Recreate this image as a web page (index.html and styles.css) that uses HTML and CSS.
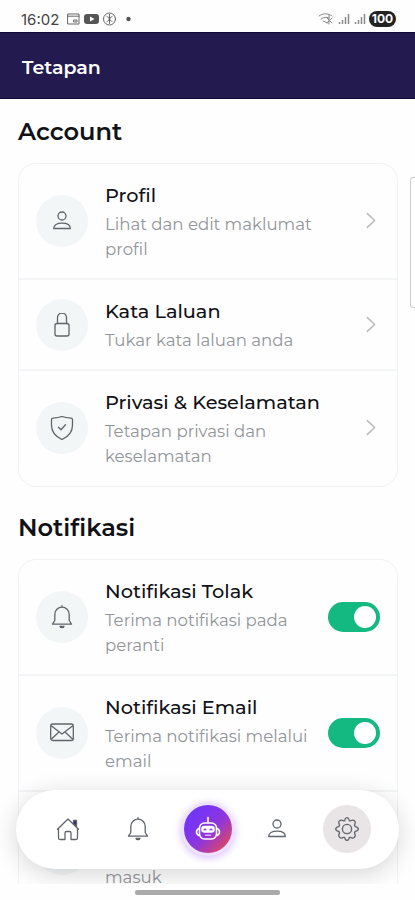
FILE: index.html
```html
<!DOCTYPE html>
<html lang="ms">
  <head>
    <meta charset="UTF-8" />
    <meta name="viewport" content="width=device-width, initial-scale=1.0" />
    <title>Tetapan</title>
    <link rel="stylesheet" href="styles.css" />
  </head>
  <body>
    <svg class="sprite">
      <symbol id="user" viewBox="0 0 24 24">
        <circle cx="12" cy="7" r="4" />
        <path d="M3.700 19.500c0-3.600 3.300-5.300 8.300-5.300s8.300 1.700 8.300 5.300z" />
      </symbol>
      <symbol id="bell" viewBox="0 0 24 24">
        <path d="M12 .6v1.600M4.800 15.500V9.400a7.200 7.200 0 0 1 14.400 0v6.100l2.300 3.700h-19z" />
        <path d="M10 21.300c.4 1.800 3.600 1.800 4 0z" />
      </symbol>
      <symbol id="chevron" viewBox="0 0 24 24">
        <path d="M8 4l8 7.500-8 7.500" />
      </symbol>
    </svg>

    <div class="statusbar">
      <span class="time">16:02</span>
      <svg class="status-left" viewBox="0 0 66 14">
        <path class="line" d="M1 2h11v10H1zM1 4.200h11M7 8h3v2H7z" />
        <rect class="solid" x="17" y="2" width="15" height="10" rx="3" />
        <path class="white" d="M23 4.500l4.500 2.500-4.500 2.500z" />
        <circle class="line" cx="42.500" cy="7" r="6" />
        <path class="line" d="M42.500 2.500v9M40 4.500c3 1 3 4 0 5M45 4.500c-3 1-3 4 0 5" />
        <circle class="solid" cx="61.500" cy="7" r="2.200" />
      </svg>
      <svg class="status-right" viewBox="0 0 48 14">
        <path class="line" d="M1 4c4-3 9-3 13 0M3 7c3-2 5-2 8-1M5 9l5 2M11 3v9M9 6l5 5M9 11l5-5" />
        <path class="signal" d="M21.500 12v-2M24.500 12V8M27.500 12V5M30.500 12V2M37.500 12v-2M40.500 12V8M43.500 12V5M46.500 12V2" />
      </svg>
      <span class="battery">100</span>
    </div>

    <header class="header">
      <h1>Tetapan</h1>
    </header>

    <main class="content">
      <h2>Account</h2>
      <div class="card">
        <div class="row">
          <div class="icon"><svg><use href="#user" /></svg></div>
          <div class="text">
            <h3>Profil</h3>
            <p>Lihat dan edit maklumat<br />profil</p>
          </div>
          <svg class="chevron"><use href="#chevron" /></svg>
        </div>
        <div class="row">
          <div class="icon">
            <svg viewBox="0 0 24 24">
              <path d="M7.500 10.500V4.500a4.500 4.500 0 0 1 9 0v6" />
              <rect x="5" y="10.500" width="14" height="12.500" rx="2" />
            </svg>
          </div>
          <div class="text">
            <h3>Kata Laluan</h3>
            <p>Tukar kata laluan anda</p>
          </div>
          <svg class="chevron"><use href="#chevron" /></svg>
        </div>
        <div class="row">
          <div class="icon">
            <svg viewBox="0 0 24 24">
              <path d="M12 .5c3 1.200 6 1.500 9 1.700q1.500.1 1.500 1.500v5.500c0 7-4.500 11.500-10.500 14.300C6 20.700 1.500 16.200 1.500 9.200V3.700q0-1.400 1.500-1.500c3-.2 6-.5 9-1.700zM8.500 11.300l2.500 2.500 4.500-5" />
            </svg>
          </div>
          <div class="text">
            <h3>Privasi &amp; Keselamatan</h3>
            <p>Tetapan privasi dan<br />keselamatan</p>
          </div>
          <svg class="chevron"><use href="#chevron" /></svg>
        </div>
      </div>

      <h2 class="second">Notifikasi</h2>
      <div class="card">
        <div class="row">
          <div class="icon"><svg><use href="#bell" /></svg></div>
          <div class="text">
            <h3>Notifikasi Tolak</h3>
            <p>Terima notifikasi pada<br />peranti</p>
          </div>
          <div class="toggle"></div>
        </div>
        <div class="row">
          <div class="icon">
            <svg viewBox="0 0 24 24">
              <rect x=".7" y="3" width="22.600" height="16.500" rx="2" />
              <path d="M1.500 5L12 13 22.500 5M1.500 18l7.500-7M22.500 18l-7.500-7" />
            </svg>
          </div>
          <div class="text">
            <h3>Notifikasi Email</h3>
            <p>Terima notifikasi melalui<br />email</p>
          </div>
          <div class="toggle"></div>
        </div>
        <div class="row">
          <div class="icon"></div>
          <div class="text">
            <h3>Bunyi</h3>
            <p>Bunyi mesej<br />masuk</p>
          </div>
          <div class="toggle"></div>
        </div>
      </div>
    </main>

    <div class="scroll-edge"></div>

    <nav class="navbar">
      <a class="item">
        <svg viewBox="0 0 24 24">
          <path d="M2.500 11.500V21q0 1.500 1.500 1.500h5V16q0-1.500 1.500-1.500h3Q15 14.500 15 16v6.500h5q1.500 0 1.500-1.500v-9.500M1.500 12.200L12 2l10.500 10.200" />
          <path class="chimney" d="M17.500 3.500h3v6l-3-2.700z" />
        </svg>
      </a>
      <a class="item"><svg><use href="#bell" /></svg></a>
      <a class="item bot">
        <svg viewBox="0 0 26 26">
          <path d="M13 1.500v5" />
          <rect x="4.500" y="7" width="17" height="16" rx="5" />
          <path d="M4 12.500q-2.500 1-2.500 3.500T4 19.500M22 12.500q2.500 1 2.500 3.500T22 19.500" />
          <rect class="visor" x="7" y="10.500" width="12" height="5.500" rx="2.500" />
          <path class="eyes" d="M9 13.800q1-1.200 2 0M15 13.800q1-1.200 2 0" />
          <path class="mouth" d="M10.500 19.300h5" />
        </svg>
      </a>
      <a class="item"><svg><use href="#user" /></svg></a>
      <a class="item active">
        <svg viewBox="0 0 24 24">
          <circle cx="12" cy="12" r="4.600" />
          <path d="M9.800 3.200Q10.400.7 12 .7t2.200 2.500q.3 1 1.300.6 2.400-1.400 3.900-.1t.2 4.100q-.4 1 .9 1.800 2.800.7 2.800 2.400t-2.800 2.400q-1.300.6-.9 1.700 1.300 2.700-.2 4.200t-3.900.1q-1-.4-1.300.6-.6 2.400-2.200 2.400t-2.200-2.400q-.3-1-1.300-.6-2.400 1.400-3.900-.1t-.2-4.200q.4-1.100-.9-1.700Q.7 13.700.7 12t2.800-2.400q1.300-.8.9-1.800-1.300-2.800.2-4.100t3.900.1q1 .4 1.300-.6z" />
        </svg>
      </a>
    </nav>

    <div class="homebar"><span></span></div>
  </body>
</html>
```

FILE: styles.css
```css
*,
*::before,
*::after {
  margin: 0;
  padding: 0;
  box-sizing: border-box;
}

body {
  position: relative;
  display: flex;
  flex-direction: column;
  height: 900px;
  overflow: hidden;
  background: #fefefe;
  color: #111118;
  font-family: Montserrat, Inter, sans-serif;
}

svg {
  fill: none;
  stroke: #60656b;
  stroke-width: 1.3;
  stroke-linecap: round;
  stroke-linejoin: round;
}

.sprite {
  position: absolute;
  width: 0;
  height: 0;
}

.statusbar {
  display: flex;
  flex: none;
  align-items: center;
  height: 32px;
  padding: 6px 19px 0 21px;
}
.time {
  width: 39px;
  margin-right: 7px;
  color: #444;
  font-family: Inter, sans-serif;
  font-size: 15px;
}
.status-left {
  width: 66px;
  height: 14px;
}
.status-right {
  width: 48px;
  height: 14px;
  margin: 0 3px 0 auto;
}
.statusbar .line {
  stroke: #666;
  stroke-width: 1;
}
.status-right .line {
  stroke: #888;
}
.solid {
  fill: #555;
  stroke: none;
}
.white {
  fill: #fff;
  stroke: none;
}
.signal {
  stroke: #888;
  stroke-width: 1.5;
  stroke-linecap: butt;
}
.battery {
  width: 27px;
  height: 16px;
  border-radius: 8px;
  background: #222;
  color: #fff;
  font-family: Inter, sans-serif;
  font-size: 12px;
  font-weight: 700;
  line-height: 16px;
  text-align: center;
}

.header {
  display: flex;
  flex: none;
  align-items: center;
  height: 67px;
  padding: 3px 22px 0;
  border-top: 1px solid #100938;
  border-bottom: 1px solid #100938;
  background: #231b4f;
}
.header h1 {
  color: #fff;
  font-size: 19px;
  font-weight: 600;
}

.content {
  flex: none;
  height: 785px;
  padding: 18px 17px 0 18px;
  overflow: hidden;
}
h2 {
  height: 30px;
  margin-bottom: 16px;
  font-size: 24.100px;
  font-weight: 600;
  line-height: 29px;
}
h2.second {
  margin-top: 26px;
}

.card {
  border: 1px solid #f1f2f3;
  border-radius: 18px;
}
.row {
  display: flex;
  align-items: center;
  padding: 16px 17px 16px 17px;
  border-bottom: 2px solid #f3f4f5;
}
.row:last-child {
  padding-bottom: 17px;
  border-bottom: none;
}
.icon {
  display: flex;
  flex: none;
  align-items: center;
  justify-content: center;
  width: 52px;
  height: 52px;
  margin-right: 17px;
  border-radius: 50%;
  background: #f3f6f7;
}
.icon svg {
  width: 24px;
  height: 24px;
}
.text {
  flex: 1;
  white-space: nowrap;
}
.text h3 {
  font-size: 19.300px;
  font-weight: 500;
  line-height: 30px;
}
.text p {
  padding-top: 2px;
  color: #929599;
  font-size: 16.600px;
  font-weight: 400;
  line-height: 25px;
}
.chevron {
  width: 22px;
  height: 22px;
  margin-right: -2px;
  stroke: #bbb;
  stroke-width: 1.7;
}
.toggle {
  flex: none;
  width: 52px;
  height: 30px;
  padding: 4px;
  border-radius: 15px;
  background: #14b981;
}
.toggle::after {
  content: "";
  display: block;
  width: 22px;
  height: 22px;
  margin-left: auto;
  border-radius: 50%;
  background: #fff;
}

.scroll-edge {
  position: absolute;
  top: 177px;
  right: -6px;
  width: 11px;
  height: 131px;
  border: 1px solid #ccc;
  border-radius: 3px;
}

.navbar {
  position: absolute;
  top: 790px;
  left: 16px;
  z-index: 1;
  display: flex;
  align-items: center;
  justify-content: space-between;
  width: 383px;
  height: 79px;
  padding: 0 28px 1px;
  border-radius: 40px;
  background: #fff;
  box-shadow: 0 5px 24px rgba(0, 0, 0, 0.16);
}
.item {
  display: flex;
  align-items: center;
  justify-content: center;
  width: 48px;
  height: 48px;
  border-radius: 50%;
}
.item svg {
  width: 24px;
  height: 24px;
}
.chimney {
  fill: #252b50;
}
.bot {
  background: linear-gradient(135deg, #6f35fa 15%, #8f35dd 55%, #ee4a4a 95%);
  box-shadow: 0 0 0 3px #eee2ff, 0 2px 9px 3px #d9bcff;
}
.bot svg {
  width: 26px;
  height: 26px;
  stroke: #fff;
  stroke-width: 1.6;
}
.visor {
  fill: #fff;
}
.bot .eyes {
  stroke: #8a35dd;
  stroke-width: 1.2;
}
.bot .mouth {
  stroke: #d9b4f5;
}
.active {
  background: #e9e4e6;
}

.homebar {
  position: absolute;
  bottom: 0;
  left: 0;
  z-index: 2;
  display: flex;
  justify-content: center;
  width: 100%;
  height: 16px;
  padding-top: 6px;
  background: #fefefe;
}
.homebar span {
  width: 145px;
  height: 5px;
  border-radius: 2px;
  background: #aaa;
}
```
